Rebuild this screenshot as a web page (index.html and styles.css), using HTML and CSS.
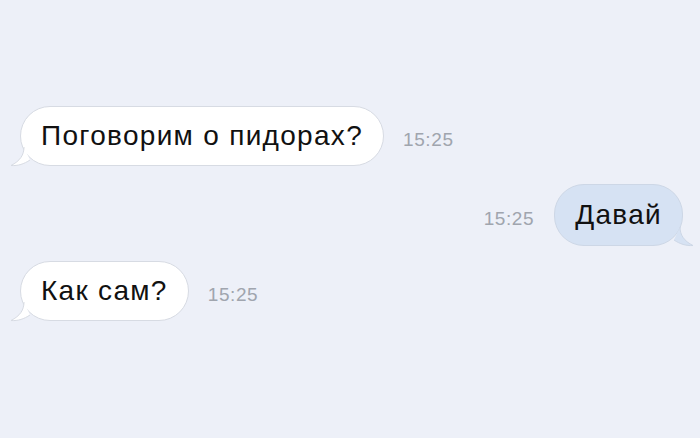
FILE: index.html
```html
<!DOCTYPE html>
<html lang="ru">
<head>
<meta charset="utf-8">
<link rel="stylesheet" href="styles.css">
</head>
<body>
<div class="chat">
  <div class="row in r1">
    <div class="bubble">Поговорим о пидорах?
      <svg class="tail" width="22" height="22" viewBox="0 0 22 22"><path d="M14 0 C14 8 10 14 1 18.5 C8 19 14 17 20 13" fill="#fff" stroke="#d7dbe3" stroke-width="1"/></svg>
    </div>
    <span class="time">15:25</span>
  </div>
  <div class="row out r2">
    <span class="time">15:25</span>
    <div class="bubble">Давай
      <svg class="tail" width="22" height="22" viewBox="0 0 22 22"><path d="M8 0 C8 8 12 14 21 18.5 C14 19 8 17 2 13" fill="#d6e2f3" stroke="#cdd7e6" stroke-width="1"/></svg>
    </div>
  </div>
  <div class="row in r3">
    <div class="bubble">Как сам?
      <svg class="tail" width="22" height="22" viewBox="0 0 22 22"><path d="M14 0 C14 8 10 14 1 18.5 C8 19 14 17 20 13" fill="#fff" stroke="#d7dbe3" stroke-width="1"/></svg>
    </div>
    <span class="time">15:25</span>
  </div>
</div>
</body>
</html>
```
FILE: styles.css
```css
html, body {
  margin: 0;
  padding: 0;
  background: #edf0f8;
  width: 700px;
  height: 438px;
  overflow: hidden;
}
.chat {
  display: flex;
  flex-direction: column;
  padding: 106px 17px 0 20px;
  font-family: "Liberation Sans", Arial, sans-serif;
}
.row {
  display: flex;
  align-items: center;
  gap: 19px;
}
.row.out {
  justify-content: flex-end;
  gap: 20px;
}
.r2 { margin-top: 18px; }
.r3 { margin-top: 15px; }
.bubble {
  position: relative;
  box-sizing: border-box;
  height: 60px;
  display: flex;
  align-items: center;
  padding: 0 20px;
  border-radius: 30px;
  background: #fff;
  border: 1px solid #d7dbe3;
  color: #111;
  font-size: 28px;
  letter-spacing: 1.3px;
}
.r2 .bubble { height: 62px; }
.out .bubble {
  background: #d6e2f3;
  border-color: #cdd7e6;
}
.time {
  color: #a0a5ae;
  font-size: 19px;
  letter-spacing: 0.6px;
  padding-top: 8px;
}
.tail {
  position: absolute;
  bottom: -4px;
  overflow: visible;
}
.in .tail { left: -11px; }
.out .tail { right: -12px; }
```
